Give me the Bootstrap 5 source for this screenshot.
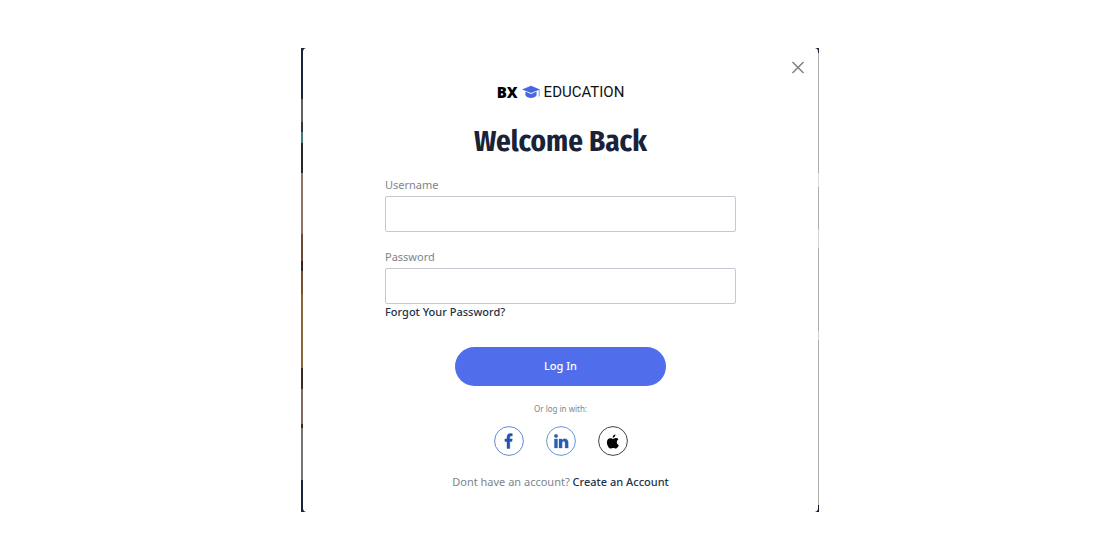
<!DOCTYPE html>
<html lang="en">
<head>
<meta charset="utf-8">
<meta name="viewport" content="width=device-width, initial-scale=1">
<title>BX Education – Log In</title>
<link href="https://cdn.jsdelivr.net/npm/bootstrap@5.3.0/dist/css/bootstrap.min.css" rel="stylesheet">
<style>
  body { font-family: "Noto Sans", sans-serif; font-size: 11px; line-height: 18px; color: #7c858c; background: #fff; }
  /* Sliver of the page behind the dialog */
  .backdrop-edge {
    width: 100%; max-width: 518px; padding: 0 1px 0 2px;
    background:
      linear-gradient(#1d2438 0 11%, #625f60 11% 16%, #343536 16% 18%, #47777e 18% 20.5%, #282623 20.5% 27%, #8d7466 27% 40%, #6b4935 40% 46%, #33251f 46% 48%, #7b5030 48% 53%, #8d6339 53% 69%, #382a25 69% 73.5%, #80695f 73.5% 81%, #352a27 81% 82%, #777573 82% 93%, #1d2438 93%) left / 5px 100% no-repeat,
      linear-gradient(#27293a 0 1%, #adadad 1% 27%, #dadada 27% 30%, #adadad 30% 39%, #d2d2d2 39% 43%, #adadad 43% 61%, #d2d2d2 61% 63%, #adadad 63% 98.5%, #10162a 98.5%) right / 4px 100% no-repeat;
  }
  .login-dialog { background: #fff; border-radius: 4px; padding: 34px 20px 21px; }
  .login-form { max-width: 351px; }
  .close-btn { top: 11px; right: 12px; width: 16px; height: 16px; line-height: 0; }
  .brand { height: 20px; color: #111; }
  .brand-bx { font: 900 15px/20px "Noto Sans", sans-serif; color: #000; }
  .brand-name { font: 400 15px/20px Roboto, sans-serif; }
  .title { font: 700 29px/36px "Fira Sans Condensed", "Liberation Sans Narrow", Roboto, sans-serif; color: #1a2238; margin: 22px 0 16px; }
  .field { height: 36px; margin-top: 2px; border: 1px solid #c3c8d1; border-radius: 2px; font-size: 11px; }
  .strong-link { color: #243349; font-weight: 500; text-decoration: none; }
  .forgot { line-height: 16px; }
  .login-btn, .login-btn:hover { width: 60%; height: 39px; margin-top: 27px; border: 0; border-radius: 20px; background: #506eec; color: #fff; font-size: 11px; font-weight: 500; }
  .or-text { font-size: 8px; line-height: 14px; margin: 16px 0 10px; }
  .socials { gap: 22px; margin-bottom: 17px; }
  .social svg { display: block; }
</style>
</head>
<body>
<main class="min-vh-100 d-flex align-items-center justify-content-center">
  <div class="backdrop-edge">
    <section class="login-dialog position-relative" role="dialog" aria-labelledby="dialog-title">
      <button type="button" class="close-btn btn p-0 border-0 position-absolute" aria-label="Close">
        <svg width="16" height="16" viewBox="0 0 16 16" fill="none" stroke="#808080" stroke-width="1.5"><path d="M2.5 3 13.5 14M13.5 3 2.5 14"/></svg>
      </button>
      <form class="login-form mx-auto text-center">
        <div class="brand d-flex align-items-center justify-content-center">
          <span class="brand-bx">BX</span>
          <svg class="ms-1 me-1" width="18" height="14" viewBox="0 0 18 14" aria-hidden="true">
            <path fill="#4865e2" d="M9 .8 18 4.4 9 8 0 4.4Z"/>
            <path fill="#4865e2" d="M3.4 6.6 9 8.9l5.6-2.3v3.6C13.6 12 11.4 13 9 13s-4.6-1-5.6-2.8Z"/>
            <path fill="none" stroke="#7288e8" stroke-width=".9" d="M17.2 4.7v6.8"/>
          </svg>
          <span class="brand-name">EDUCATION</span>
        </div>
        <h1 class="title" id="dialog-title">Welcome Back</h1>
        <div class="text-start mb-3">
          <label for="username" class="d-block">Username</label>
          <input id="username" type="text" class="field form-control" autocomplete="username">
        </div>
        <div class="text-start">
          <label for="password" class="d-block">Password</label>
          <input id="password" type="password" class="field form-control" autocomplete="current-password">
          <a href="#" class="strong-link forgot d-block">Forgot Your Password?</a>
        </div>
        <button type="submit" class="login-btn btn p-0">Log In</button>
        <p class="or-text">Or log in with:</p>
        <div class="socials d-flex justify-content-center">
          <a href="#" class="social" aria-label="Facebook">
            <svg width="30" height="30" viewBox="0 0 30 30"><circle cx="15" cy="15" r="14.4" fill="none" stroke="#628bd0"/><path fill="#2455ad" stroke="#2455ad" stroke-width=".4" d="M13 22.5v-7h-2.1v-2.6H13v-1.7c0-2.4 1.3-3.7 3.6-3.7.8 0 1.3.1 1.7.2v2.4h-1.1c-1.1 0-1.4.6-1.4 1.4v1.4h2.5l-.4 2.6h-2.1v7Z"/></svg>
          </a>
          <a href="#" class="social" aria-label="LinkedIn">
            <svg width="30" height="30" viewBox="0 0 30 30"><circle cx="15" cy="15" r="14.4" fill="none" stroke="#6596dc"/><g fill="#2a5eb4" stroke="#2a5eb4" stroke-width=".3"><circle cx="10" cy="10" r="1.8"/><path d="M8.4 13h3.1v9H8.4ZM13 13h3v1.3c.6-1 1.6-1.5 2.7-1.5 2.7 0 3.5 1.7 3.5 4.1V22h-3.1v-4.5c0-1.3-.3-2.2-1.4-2.2-1.2 0-1.6.9-1.6 2.1V22H13Z"/></g></svg>
          </a>
          <a href="#" class="social" aria-label="Apple">
            <svg width="30" height="30" viewBox="0 0 30 30"><circle cx="15" cy="15" r="14.4" fill="none" stroke="#444"/><path fill="#050505" d="M17.4 8.6c.1 1.8-1.2 3.2-2.7 3.2-.2-1.5 1.2-3 2.7-3.2ZM15 12.9c.6 0 1.5-.8 2.8-.8 1 0 2 .5 2.6 1.3-2.3 1.4-2 4.7.5 5.6-.6 1.6-1.8 3.5-3.2 3.5-1 0-1.3-.6-2.5-.6s-1.6.6-2.5.6c-1.8 0-3.8-3.4-3.8-6.1 0-2.6 1.6-4.2 3.5-4.2 1.2 0 2 .7 2.6.7Z"/></svg>
          </a>
        </div>
        <div>Dont have an account? <a href="#" class="strong-link">Create an Account</a></div>
      </form>
    </section>
  </div>
</main>
<script src="https://cdn.jsdelivr.net/npm/bootstrap@5.3.0/dist/js/bootstrap.bundle.min.js"></script>
</body>
</html>
